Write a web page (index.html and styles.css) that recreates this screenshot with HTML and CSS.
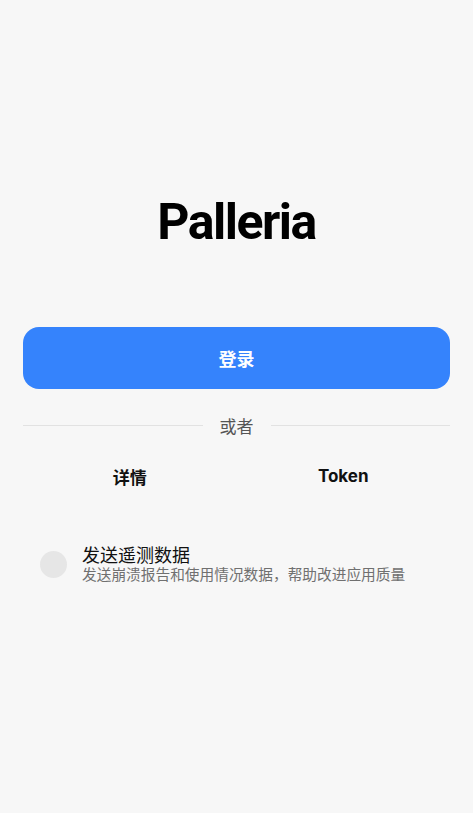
FILE: index.html
```html
<!DOCTYPE html>
<html lang="zh-CN">
<head>
    <meta charset="UTF-8">
    <meta name="viewport" content="width=device-width, initial-scale=1.0">
    <title>Palleria</title>
    <link rel="stylesheet" href="styles.css">
</head>
<body>

    <div class="screen">
        <h1 class="title">Palleria</h1>

        <button class="login-btn">登录</button>

        <div class="divider">
            <span class="line"></span>
            <span class="divider-text">或者</span>
            <span class="line"></span>
        </div>

        <div class="alt-row">
            <button class="alt-btn">详情</button>
            <button class="alt-btn">Token</button>
        </div>

        <div class="telemetry">
            <span class="toggle"></span>
            <div class="telemetry-text">
                <div class="telemetry-title">发送遥测数据</div>
                <div class="telemetry-desc">发送崩溃报告和使用情况数据，帮助改进应用质量</div>
            </div>
        </div>
    </div>

</body>
</html>
```

FILE: styles.css
```css
html, body {
    margin: 0;
    padding: 0;
    background: #f7f7f7;
}
body {
    font-family: 'Inter', 'Roboto', 'Noto Sans CJK SC', sans-serif;
    color: #111;
}
.screen {
    padding: 0 23px;
    min-height: 813px;
    box-sizing: border-box;
}
.title {
    margin: 0 0 75px;
    padding-top: 192px;
    text-align: center;
    font-family: 'Roboto', 'Inter', sans-serif;
    font-size: 50px;
    font-weight: 700;
    letter-spacing: -1.5px;
    line-height: 60px;
    color: #000;
}
.login-btn {
    display: block;
    width: 100%;
    height: 62px;
    border: none;
    border-radius: 16px;
    background: #3583fc;
    color: #fff;
    font-family: inherit;
    font-size: 18px;
    font-weight: 700;
    cursor: pointer;
}
.divider {
    display: flex;
    align-items: center;
    gap: 17px;
    margin-top: 24px;
    height: 24px;
}
.line {
    flex: 1;
    height: 1px;
    background: #e2e2e2;
}
.divider-text {
    font-size: 17px;
    color: #555;
}
.alt-row {
    display: flex;
    margin-top: 20px;
}
.alt-btn {
    flex: 1;
    height: 38px;
    border: none;
    background: transparent;
    font-family: inherit;
    font-size: 17px;
    font-weight: 700;
    color: #111;
    cursor: pointer;
}
.telemetry {
    display: flex;
    align-items: center;
    gap: 15px;
    margin-top: 50px;
    padding-left: 17px;
}
.toggle {
    width: 27px;
    height: 27px;
    border-radius: 50%;
    background: #e6e6e6;
}
.telemetry-title {
    font-size: 18px;
    line-height: 21px;
    color: #111;
}
.telemetry-desc {
    font-size: 14.7px;
    line-height: 18px;
    color: #707070;
}
```
